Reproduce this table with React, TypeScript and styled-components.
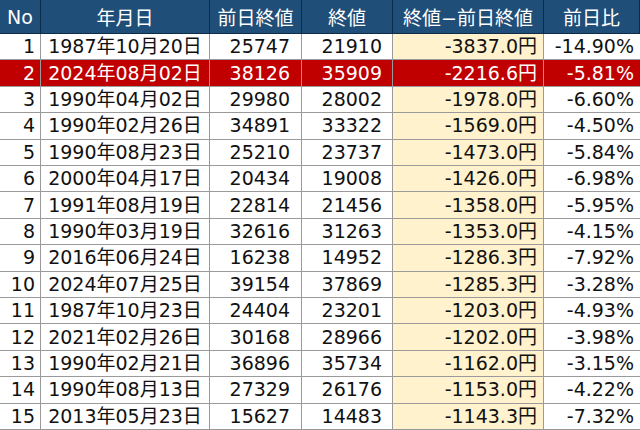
import React from "react";
import styled, { createGlobalStyle } from "styled-components";

const Global = createGlobalStyle`
  html, body { margin: 0; padding: 0; background: #fff; }
  body { width: 640px; height: 430px; overflow: hidden; }
`;

const Grid = styled.div`
  display: grid;
  grid-template-columns: 41px 169px 92px 91px 151px 96px;
  grid-template-rows: 34px repeat(15, 1fr);
  width: 640px;
  height: 430px;
  font-family: "DejaVu Sans", "Noto Sans CJK JP", sans-serif;
  font-size: 19px;
  box-sizing: border-box;
`;

const Head = styled.div`
  background: #1f4e79;
  color: #fff;
  display: flex;
  align-items: center;
  justify-content: center;
  border-right: 1px solid #0f2b45;
  border-bottom: 1px solid #0f2b45;
  white-space: nowrap;
  &:last-child { border-right: none; }
`;

type CellProps = { $align: "right" | "center"; $pad: number; $red: boolean; $hl: boolean; $last: boolean };

const Cell = styled.div<CellProps>`
  display: flex;
  align-items: center;
  justify-content: ${(p) => (p.$align === "right" ? "flex-end" : "center")};
  padding-right: ${(p) => p.$pad}px;
  background: ${(p) => (p.$red ? "#c00000" : p.$hl ? "#fff2cc" : "#fff")};
  color: ${(p) => (p.$red ? "#fff" : "#111")};
  border-right: ${(p) => (p.$last ? "none" : "1px solid #9a9a9a")};
  border-bottom: 1px solid #9a9a9a;
  white-space: nowrap;
  box-sizing: border-box;
  line-height: 1;
`;

const rows: [number, string, string, string, string, string][] = [
  [1, "1987年10月20日", "25747", "21910", "-3837.0円", "-14.90%"],
  [2, "2024年08月02日", "38126", "35909", "-2216.6円", "-5.81%"],
  [3, "1990年04月02日", "29980", "28002", "-1978.0円", "-6.60%"],
  [4, "1990年02月26日", "34891", "33322", "-1569.0円", "-4.50%"],
  [5, "1990年08月23日", "25210", "23737", "-1473.0円", "-5.84%"],
  [6, "2000年04月17日", "20434", "19008", "-1426.0円", "-6.98%"],
  [7, "1991年08月19日", "22814", "21456", "-1358.0円", "-5.95%"],
  [8, "1990年03月19日", "32616", "31263", "-1353.0円", "-4.15%"],
  [9, "2016年06月24日", "16238", "14952", "-1286.3円", "-7.92%"],
  [10, "2024年07月25日", "39154", "37869", "-1285.3円", "-3.28%"],
  [11, "1987年10月23日", "24404", "23201", "-1203.0円", "-4.93%"],
  [12, "2021年02月26日", "30168", "28966", "-1202.0円", "-3.98%"],
  [13, "1990年02月21日", "36896", "35734", "-1162.0円", "-3.15%"],
  [14, "1990年08月13日", "27329", "26176", "-1153.0円", "-4.22%"],
  [15, "2013年05月23日", "15627", "14483", "-1143.3円", "-7.32%"],
];

const headers = ["No", "年月日", "前日終値", "終値", "終値−前日終値", "前日比"];
const aligns: ("right" | "center")[] = ["right", "center", "right", "right", "right", "right"];
const pads = [5, 0, 11, 10, 6, 6];

export default function App() {
  return (
    <>
      <Global />
      <Grid>
        {headers.map((h) => (
          <Head key={h}>{h}</Head>
        ))}
        {rows.map((r) =>
          r.map((v, i) => (
            <Cell
              key={`${r[0]}-${i}`}
              $align={aligns[i]}
              $pad={pads[i]}
              $red={r[0] === 2}
              $hl={i === 4}
              $last={i === 5}
            >
              {v}
            </Cell>
          ))
        )}
      </Grid>
    </>
  );
}
